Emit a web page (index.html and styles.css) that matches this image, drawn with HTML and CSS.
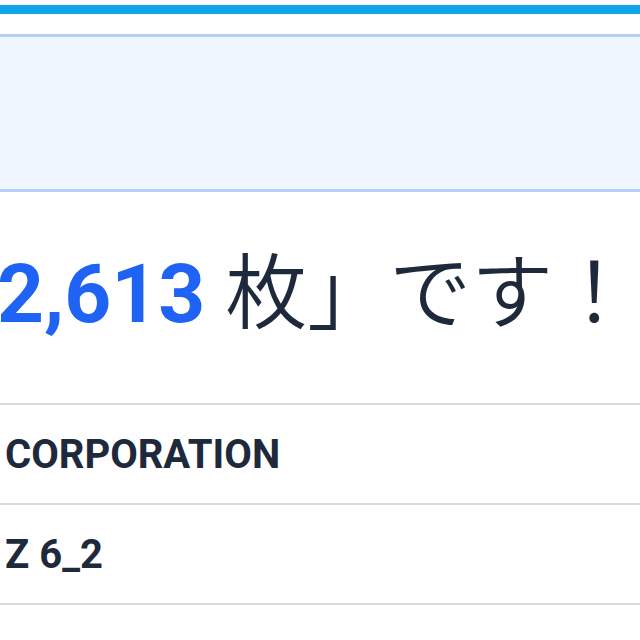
FILE: index.html
```html
<!DOCTYPE html>
<html lang="ja">
<head>
<meta charset="utf-8">
<title>Result</title>
<link rel="stylesheet" href="styles.css">
</head>
<body>
<div class="page">
  <div class="topbar"></div>
  <div class="banner"></div>
  <p class="headline"><span class="count">2,613</span> 枚」です！</p>
  <div class="table">
    <div class="row">CORPORATION</div>
    <div class="row">Z 6_2</div>
    <div class="row"></div>
  </div>
</div>
</body>
</html>
```

FILE: styles.css
```css
html, body {
  margin: 0;
  padding: 0;
  background: #ffffff;
  overflow: hidden;
}

.page {
  width: 640px;
  height: 640px;
  overflow: hidden;
  font-family: Roboto, "Noto Sans CJK JP", sans-serif;
  color: #1e293b;
}

.topbar {
  margin-top: 5px;
  height: 9px;
  background: #0ea5e9;
}

.banner {
  margin-top: 20px;
  height: 152px;
  background: #eff6ff;
  border-top: 3px solid #b4d0f8;
  border-bottom: 3px solid #b4d0f8;
}

.headline {
  margin: 0 0 0 -3px;
  padding: 52px 0 59px;
  height: 100px;
  line-height: 100px;
  font-size: 82px;
  font-weight: 350;
  white-space: nowrap;
  font-family: Roboto, "Noto Sans CJK JP", sans-serif;
}

.count {
  color: #1f63f4;
  font-weight: 700;
}

.table {
  border-top: 2px solid #d5dbe3;
}

.row {
  height: 98px;
  border-bottom: 2px solid #d5dbe3;
  display: flex;
  align-items: center;
  padding-left: 5px;
  font-size: 40px;
  font-weight: 700;
  color: #1e293b;
}
```
